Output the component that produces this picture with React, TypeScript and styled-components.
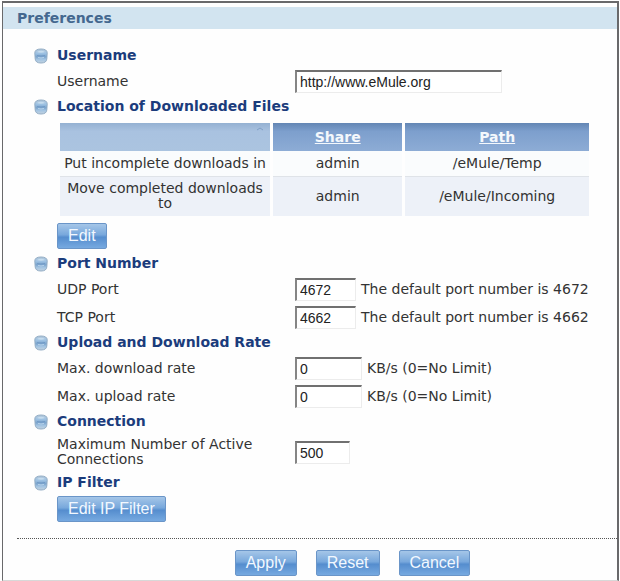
import React, { useState } from "react";
import styled, { createGlobalStyle } from "styled-components";

const GlobalStyle = createGlobalStyle`
  * {
    box-sizing: border-box;
  }

  body {
    margin: 0;
    background: #fff;
    color: #333;
    font-family: "DejaVu Sans", Verdana, sans-serif;
    font-size: 14px;
    line-height: 15px;
  }
`;

const Panel = styled.main`
  margin: 1px 1px 0 2px;
  border: 2px solid #69696b;
  border-left-width: 1px;
  border-bottom: 1px solid #d8d8d8;
  padding-top: 4px;
  background: #fefefe;
`;

const Title = styled.h1`
  margin: 0 0 15px;
  padding: 0 14px;
  background: #d2e4f0;
  color: #44688f;
  font-size: 14px;
  line-height: 22px;
`;

const Form = styled.form`
  margin: 0;
`;

const Section = styled.section`
  padding: 0 28px 0 54px;
`;

const SectionTitle = styled.h2`
  display: flex;
  align-items: center;
  gap: 9px;
  height: 23px;
  margin: 0 0 0 -23px;
  color: #1b3c7c;
  font-size: 14px;
`;

const Row = styled.div`
  display: flex;
  align-items: center;
  min-height: 28px;
  padding: 4px 0;
`;

const FieldLabel = styled.label`
  flex: 0 0 238px;
  padding-right: 30px;
`;

const TextInput = styled.input<{ $width: number }>`
  width: ${(props) => props.$width}px;
  height: 23px;
  margin: -2px 5px -2px 0;
  padding: 0 3px;
  border: 1px solid #ececec;
  border-top: 2px solid #707070;
  border-left: 2px solid #858585;
  border-radius: 0;
  background: #fff;
  color: #222;
  font-family: "Liberation Sans", Arial, sans-serif;
  font-size: 14px;
`;

const Table = styled.table`
  width: calc(100% - 3px);
  margin: 5px 0 7px 3px;
  border-collapse: collapse;
  table-layout: fixed;
  text-align: center;
`;

const HeadCell = styled.th<{ $width: string; $plain?: boolean }>`
  width: ${(props) => props.$width};
  height: 28px;
  padding: 0;
  background: ${(props) =>
    props.$plain
      ? "linear-gradient(#94b1d2, #a9c2e0 30%, #abc4e0)"
      : "linear-gradient(#6386b4, #7d9fcd 30%, #8dacd5)"};
  background-clip: padding-box;
  color: #fff;

  & + & {
    border-left: 3px solid #fefefe;
  }
`;

const SortLink = styled.a`
  color: #f4f8fc;
`;

const SortMark = styled.svg`
  display: block;
  margin: -10px 7px 0 auto;
`;

const Cell = styled.td<{ $shaded?: boolean }>`
  height: ${(props) => (props.$shaded ? 40 : 25)}px;
  padding: 0 2px;
  border-top: ${(props) => (props.$shaded ? "1px solid #dfe3e8" : "none")};
  background: ${(props) => (props.$shaded ? "#edf1f8" : "#fafcfd")};
  background-clip: padding-box;

  & + & {
    border-left: 3px solid #fefefe;
  }
`;

const Button = styled.button`
  display: block;
  height: 26px;
  padding: 0 10px;
  border: 1px solid #6a95c8;
  border-radius: 2px;
  background: linear-gradient(#a5c6e8, #78a8dc 45%, #558dce 55%, #76a9e0);
  color: #f2f8ff;
  font-family: "Liberation Sans", Arial, sans-serif;
  font-size: 16px;
  cursor: pointer;
`;

const EditButton = styled(Button)`
  margin-bottom: 3px;
`;

const FilterButton = styled(Button)`
  margin: 2px 0 16px;
`;

const Actions = styled.div`
  display: flex;
  justify-content: center;
  gap: 19px;
  margin-left: 14px;
  padding: 11px 0 4px 71px;
  border-top: 1px dotted #555;
`;

const BulletIcon = () => (
  <svg width="14" height="16" viewBox="0 0 14 16" aria-hidden="true">
    <defs>
      <linearGradient id="bullet" x1="0" y1="0" x2="0" y2="1">
        <stop offset="0" stopColor="#b4c8da" />
        <stop offset="0.3" stopColor="#9fc3e4" />
        <stop offset="0.55" stopColor="#7ba4cd" />
        <stop offset="0.75" stopColor="#a3c4e2" />
        <stop offset="1" stopColor="#c3d3e0" />
      </linearGradient>
    </defs>
    <path
      d="M0.8 5Q0.8 1 7 1Q13.2 1 13.2 5L12.8 11Q12.5 15 7 15Q1.5 15 1.2 11Z"
      fill="url(#bullet)"
      stroke="#93adc5"
    />
    <path d="M3 4Q7 1.5 11 4Q7 5.5 3 4Z" fill="#c6dcee" />
    <path d="M3 7.5Q7 8.5 11 7.5" fill="none" stroke="#719ac6" />
    <path d="M4 9.5Q7 10.5 10 9.5" fill="none" stroke="#b9d4ec" />
  </svg>
);

interface GroupProps {
  title: string;
  children: React.ReactNode;
}

const Group: React.FC<GroupProps> = ({ title, children }) => (
  <Section>
    <SectionTitle>
      <BulletIcon />
      {title}
    </SectionTitle>
    {children}
  </Section>
);

interface FieldProps {
  id: string;
  label: string;
  value: string;
  width: number;
  hint?: string;
}

const Field: React.FC<FieldProps> = ({ id, label, value, width, hint }) => {
  const [text, setText] = useState(value);

  return (
    <Row>
      <FieldLabel htmlFor={id}>{label}</FieldLabel>
      <TextInput
        id={id}
        type="text"
        $width={width}
        value={text}
        onChange={(event) => setText(event.target.value)}
      />
      {hint && <span>{hint}</span>}
    </Row>
  );
};

const App: React.FC = () => {
  return (
    <>
      <GlobalStyle />
      <Panel>
        <Title>Preferences</Title>
        <Form onSubmit={(event) => event.preventDefault()}>
          <Group title="Username">
            <Field
              id="username"
              label="Username"
              value="http://www.eMule.org"
              width={207}
            />
          </Group>
          <Group title="Location of Downloaded Files">
            <Table>
              <thead>
                <tr>
                  <HeadCell $width="40%" $plain>
                    <SortMark width="6" height="4" aria-hidden="true">
                      <path d="M0 3L3 1L6 3" fill="none" stroke="#7f9fc6" />
                    </SortMark>
                  </HeadCell>
                  <HeadCell $width="25%">
                    <SortLink href="#share">Share</SortLink>
                  </HeadCell>
                  <HeadCell $width="35%">
                    <SortLink href="#path">Path</SortLink>
                  </HeadCell>
                </tr>
              </thead>
              <tbody>
                <tr>
                  <Cell>Put incomplete downloads in</Cell>
                  <Cell>admin</Cell>
                  <Cell>/eMule/Temp</Cell>
                </tr>
                <tr>
                  <Cell $shaded>Move completed downloads to</Cell>
                  <Cell $shaded>admin</Cell>
                  <Cell $shaded>/eMule/Incoming</Cell>
                </tr>
              </tbody>
            </Table>
            <EditButton type="button">Edit</EditButton>
          </Group>
          <Group title="Port Number">
            <Field
              id="udp-port"
              label="UDP Port"
              value="4672"
              width={61}
              hint="The default port number is 4672"
            />
            <Field
              id="tcp-port"
              label="TCP Port"
              value="4662"
              width={61}
              hint="The default port number is 4662"
            />
          </Group>
          <Group title="Upload and Download Rate">
            <Field
              id="download-rate"
              label="Max. download rate"
              value="0"
              width={67}
              hint="KB/s (0=No Limit)"
            />
            <Field
              id="upload-rate"
              label="Max. upload rate"
              value="0"
              width={67}
              hint="KB/s (0=No Limit)"
            />
          </Group>
          <Group title="Connection">
            <Field
              id="connections"
              label="Maximum Number of Active Connections"
              value="500"
              width={55}
            />
          </Group>
          <Group title="IP Filter">
            <FilterButton type="button">Edit IP Filter</FilterButton>
          </Group>
          <Actions>
            <Button type="submit">Apply</Button>
            <Button type="reset">Reset</Button>
            <Button type="button">Cancel</Button>
          </Actions>
        </Form>
      </Panel>
    </>
  );
};

export default App;
